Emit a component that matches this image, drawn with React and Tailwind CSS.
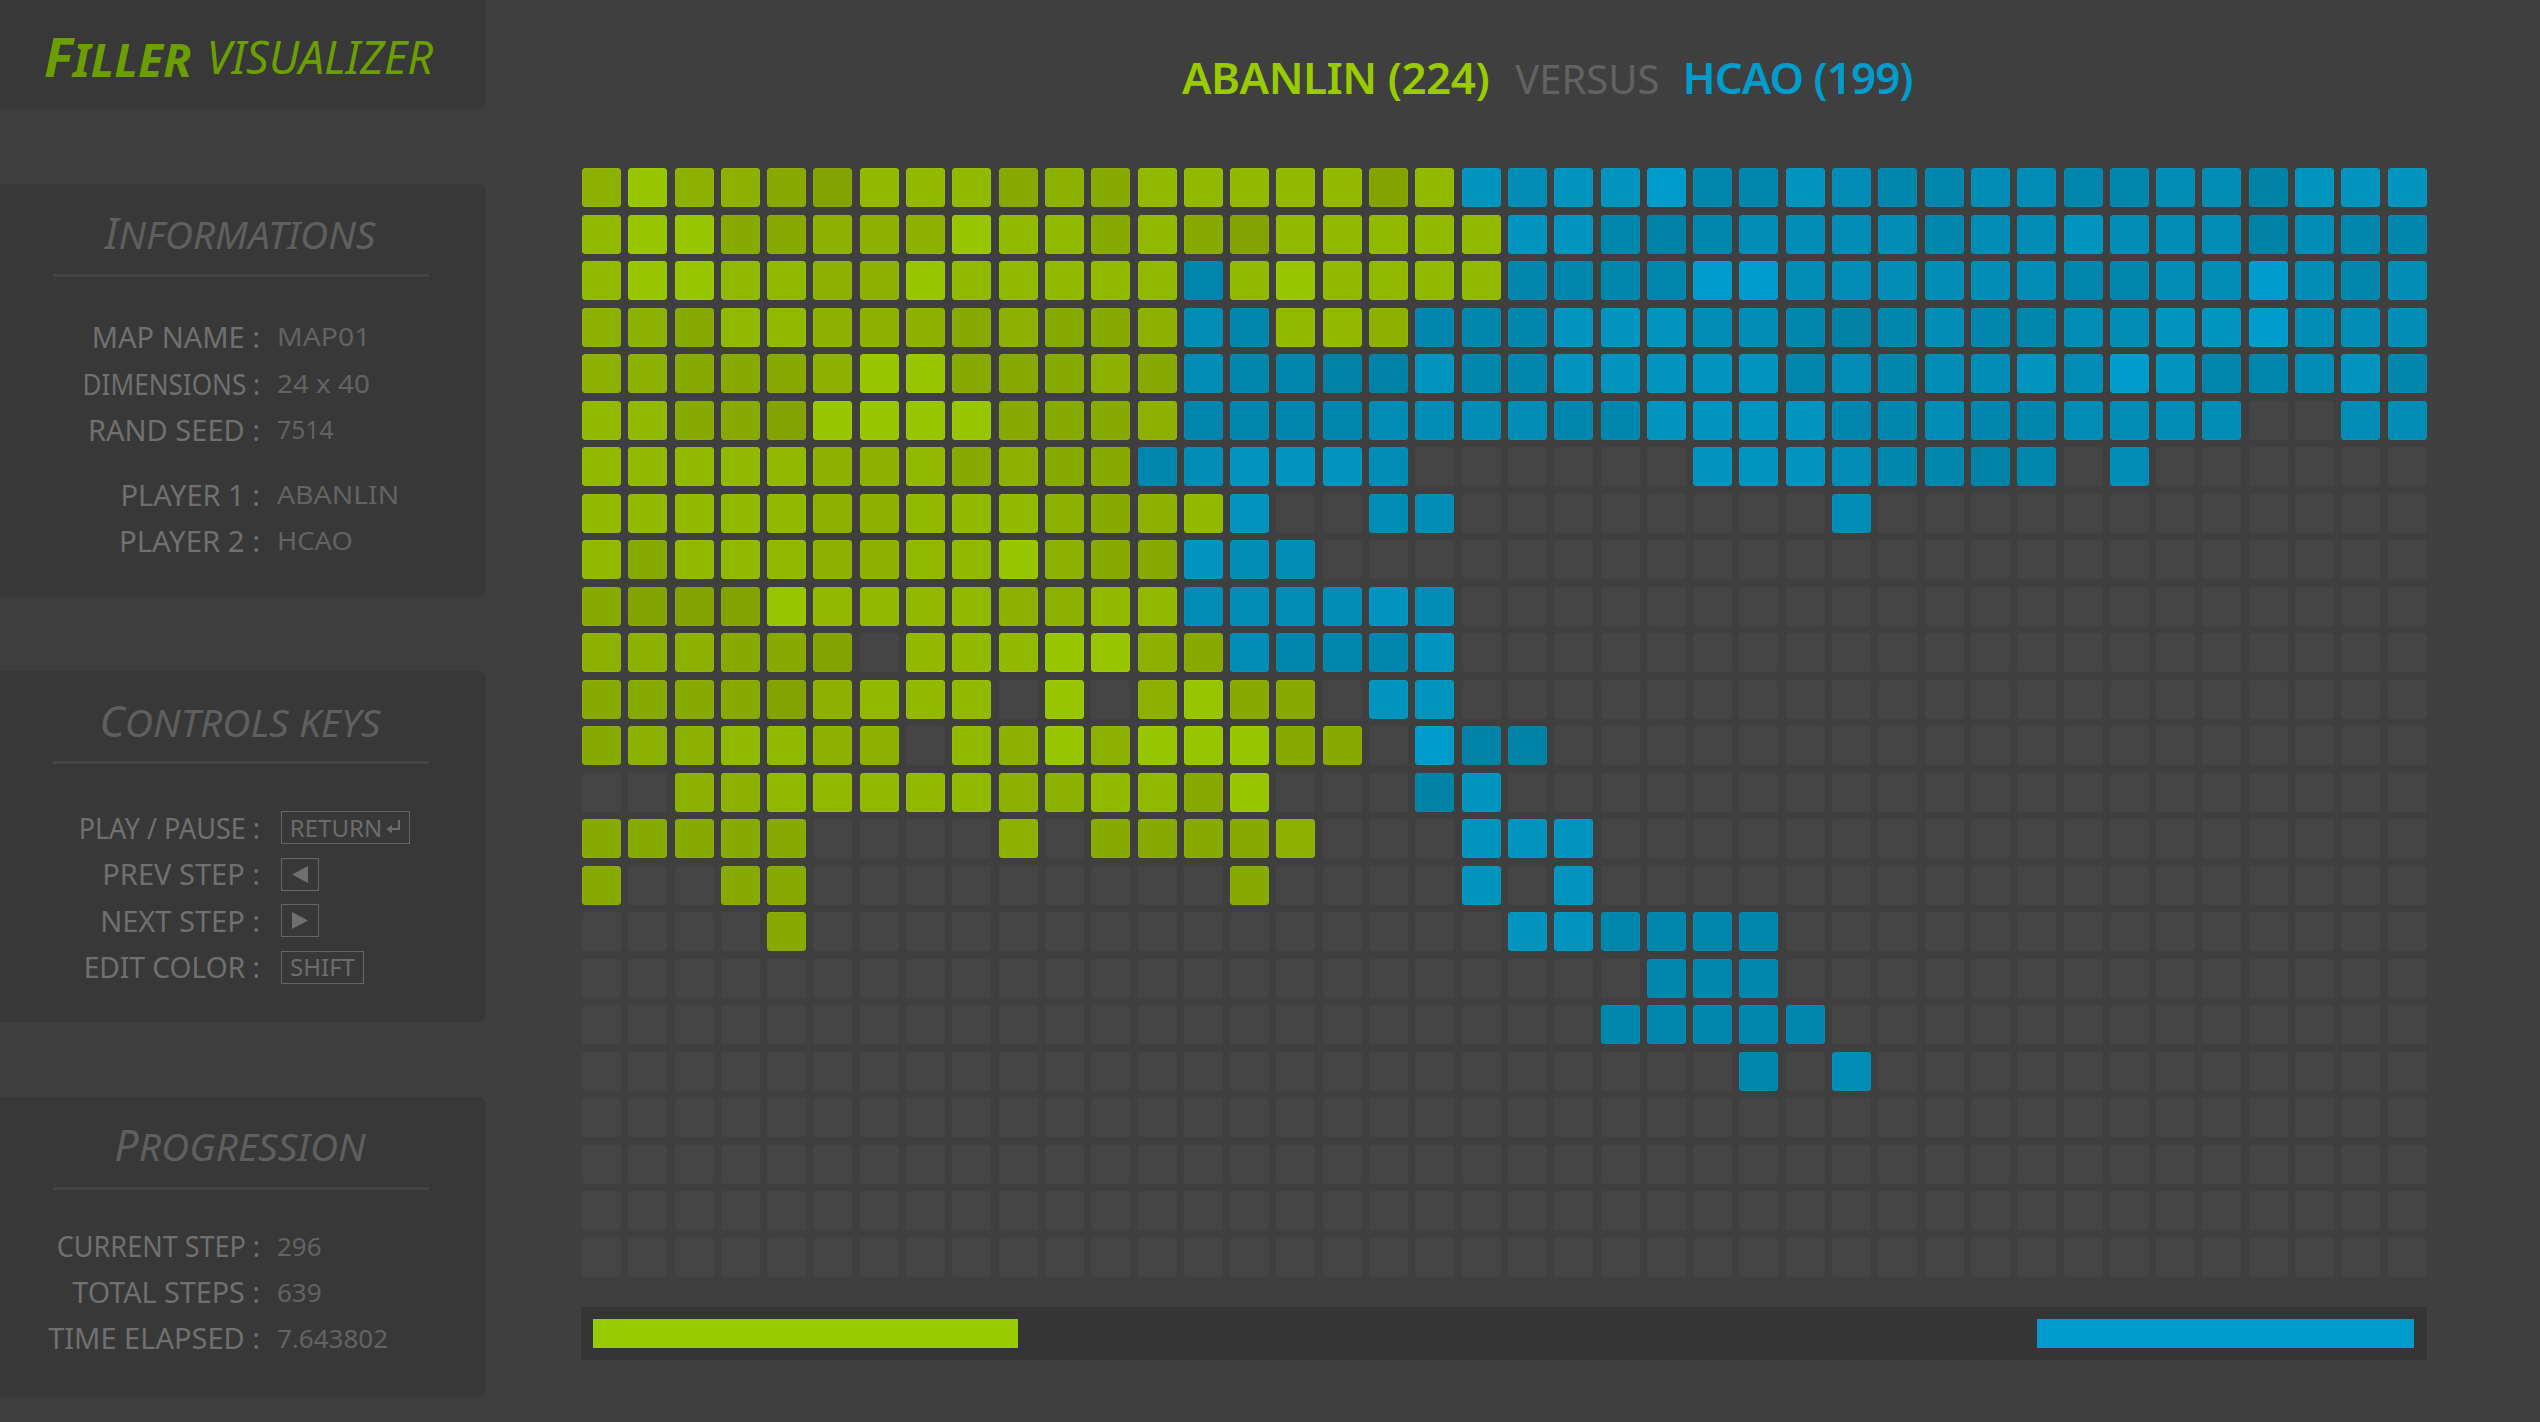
const ROWS = [
  'ceccbadddbcbdddddadDCDDEBBDCBBCCBBCCADDD',
  'deebbccceddbdbadddddDDBABCCCCBCCDCCCACBB',
  'deeddccedddddBdeddddBBBBEECCCCCCBBCCECBC',
  'ccbddcccbcbbcCBddcBBBDDDCCBABCBBCCDDECCC',
  'ccbbbceebbbcbCBBAADBBDDDDDBCBCCDCEDBBCDB',
  'ddbbaeeeebbbcBBBBCCCCBBDDDDBBCBBCCCC..CC',
  'dddddccdbcbbBCDDDC......DDDCBBAB.C......',
  'dddddccdddcbcdD..CC........C............',
  'dbdddccddecbbDCC........................',
  'baaaeddddccddCCCCDC.....................',
  'cccbba.dddeecbCBBBD.....................',
  'bbbbacddd.e.cebb.DD.....................',
  'bccddcc.dceceeebb.EAA...................',
  '..ccdddddccddbe...AD....................',
  'bbbbb....c.bbbbc...DDD..................',
  'b..bb.........b....D.D..................',
  '....b...............DDBBBB..............',
  '.......................BBB..............',
  '......................BBBBB.............',
  '.........................B.C............',
  '........................................',
  '........................................',
  '........................................',
  '........................................',
]

const CELL = {
  '.': 'bg-[#454545] border-[#454545]',
  a: 'bg-[#82a300] border-[#88a80a]',
  b: 'bg-[#87aa00] border-[#8dae0a]',
  c: 'bg-[#8cb100] border-[#92b50a]',
  d: 'bg-[#91b900] border-[#97bd0a]',
  e: 'bg-[#97c600] border-[#9dca0a]',
  A: 'bg-[#0081a6] border-[#0886aa]',
  B: 'bg-[#0086ad] border-[#088bb1]',
  C: 'bg-[#008cb5] border-[#0891b8]',
  D: 'bg-[#0094bf] border-[#0899c3]',
  E: 'bg-[#009ccb] border-[#08a1ce]',
}

const LABEL = 'w-[260px] shrink-0 origin-right text-right text-[29px] text-[#707070] whitespace-nowrap '

function Row({ label, value, labelClass = '', valueClass = '', className = '' }) {
  return (
    <div className={'flex h-[46.5px] items-center ' + className}>
      <div className={LABEL + labelClass}>{label}</div>
      <div className={'ml-[17px] origin-left text-[26px] text-[#636363] whitespace-nowrap ' + valueClass}>{value}</div>
    </div>
  )
}

function KeyRow({ label, labelClass = '', children }) {
  return (
    <div className="flex h-[46.5px] items-center">
      <div className={LABEL + labelClass}>{label}</div>
      <div className="ml-[21px] flex h-[33px] items-center justify-center border border-[#666666] text-[24px] text-[#6c6c6c]">
        {children}
      </div>
    </div>
  )
}

function Panel({ title, children, titleClass = '', className = '' }) {
  return (
    <section className={'rounded-r-lg bg-[#383838] ' + className}>
      <h2 className={'flex h-[90px] items-center justify-center font-normal italic text-[#5f5f5f] ' + titleClass}>
        <span className="-ml-[6px] inline-block whitespace-nowrap text-[39px] first-letter:text-[43px]">{title}</span>
      </h2>
      <div className="ml-[53px] h-[3px] w-[376px] bg-[#444444]" />
      {children}
    </section>
  )
}

export default function App() {
  const p1 = 224
  const p2 = 199
  const total = 960

  return (
    <div className="flex h-[1422px] w-[2540px] overflow-hidden bg-[#3f3f3f] font-['Noto_Sans',sans-serif]">
      <aside className="flex w-[486px] shrink-0 flex-col gap-[74.67px]">
        <header className="flex h-[109px] items-center rounded-br-lg bg-[#383838] pl-[44px] pt-[4px] italic text-[#6b9e00]">
          <span className="text-[46px] font-bold whitespace-nowrap">
            <span className="text-[54px]">F</span>ILLER
          </span>
          <span className="ml-[15px] text-[45px] whitespace-nowrap">VISUALIZER</span>
        </header>

        <Panel title="INFORMATIONS" titleClass="pt-[10px]" className="h-[413px]">
          <div className="mt-[37px]">
            <Row label="MAP NAME :" value="MAP01" valueClass="scale-x-[1.09]" />
            <Row label="DIMENSIONS :" value="24 x 40" labelClass="scale-x-[0.9]" valueClass="scale-x-[1.07]" />
            <Row label="RAND SEED :" value="7514" valueClass="scale-x-[0.95]" />
            <Row label="PLAYER 1 :" value="ABANLIN" valueClass="scale-x-[1.09]" className="mt-[18px]" />
            <Row label="PLAYER 2 :" value="HCAO" labelClass="scale-x-[1.01]" valueClass="scale-x-[1.05]" />
          </div>
        </Panel>

        <Panel title="CONTROLS KEYS" titleClass="pt-[10px]" className="h-[351px]">
          <div className="mt-[40px]">
            <KeyRow label="PLAY / PAUSE :" labelClass="scale-x-[0.93]">
              <div className="flex w-[127px] items-center justify-center gap-[3px]">
                RETURN
                <svg width="16" height="17" viewBox="0 0 16 17" fill="none" stroke="#6c6c6c" strokeWidth="2">
                  <path d="M14 1v9H3" />
                  <path d="M7 6l-6 4 6 4z" fill="#6c6c6c" stroke="none" />
                </svg>
              </div>
            </KeyRow>
            <KeyRow label="PREV STEP :">
              <div className="flex w-[36px] justify-center">
                <svg width="16" height="17" viewBox="0 0 16 17"><path d="M16 0v17L0 8.5z" fill="#707070" /></svg>
              </div>
            </KeyRow>
            <KeyRow label="NEXT STEP :">
              <div className="flex w-[36px] justify-center">
                <svg width="16" height="17" viewBox="0 0 16 17"><path d="M0 0v17l16-8.5z" fill="#707070" /></svg>
              </div>
            </KeyRow>
            <KeyRow label="EDIT COLOR :" labelClass="scale-x-[0.97]">
              <div className="flex w-[81px] justify-center">SHIFT</div>
            </KeyRow>
          </div>
        </Panel>

        <Panel title="PROGRESSION" titleClass="pt-[6px]" className="h-[300px]">
          <div className="mt-[33px]">
            <Row label="CURRENT STEP :" value="296" labelClass="scale-x-[0.93]" />
            <Row label="TOTAL STEPS :" value="639" labelClass="scale-x-[0.99]" className="-mt-[0.5px]" />
            <Row label="TIME ELAPSED :" value="7.643802" className="-mt-[0.5px]" />
          </div>
        </Panel>
      </aside>

      <main className="pl-[96px]">
        <div className="flex h-[168px] items-baseline pl-[600px] pt-[49px] text-[44px] leading-[56px] whitespace-nowrap">
          <span className="font-semibold tracking-[-0.5px] text-[#99cc00]">ABANLIN ({p1})</span>
          <span className="ml-[26px] text-[40px] text-[#626262]">VERSUS</span>
          <span className="ml-[23px] font-semibold tracking-[-1px] text-[#009ccb]">HCAO ({p2})</span>
        </div>

        <div className="grid w-[1845px] grid-cols-[repeat(40,39px)] grid-rows-[repeat(24,39px)] gap-x-[7.3px] gap-y-[7.5px]">
          {ROWS.flatMap((row, y) =>
            row.split('').map((c, x) => (
              <div key={y + '-' + x} className={'rounded-[3px] border ' + CELL[c]} />
            ))
          )}
        </div>

        <div className="mt-[30px] -ml-[1px] flex h-[53px] w-[1846px] justify-between bg-[#353535] pl-[12px] pr-[13px] py-[12px]">
          <div className="h-full bg-[#99cc00]" style={{ width: (p1 / total) * 1821 }} />
          <div className="h-full bg-[#009ccb]" style={{ width: (p2 / total) * 1821 }} />
        </div>
      </main>
    </div>
  )
}
